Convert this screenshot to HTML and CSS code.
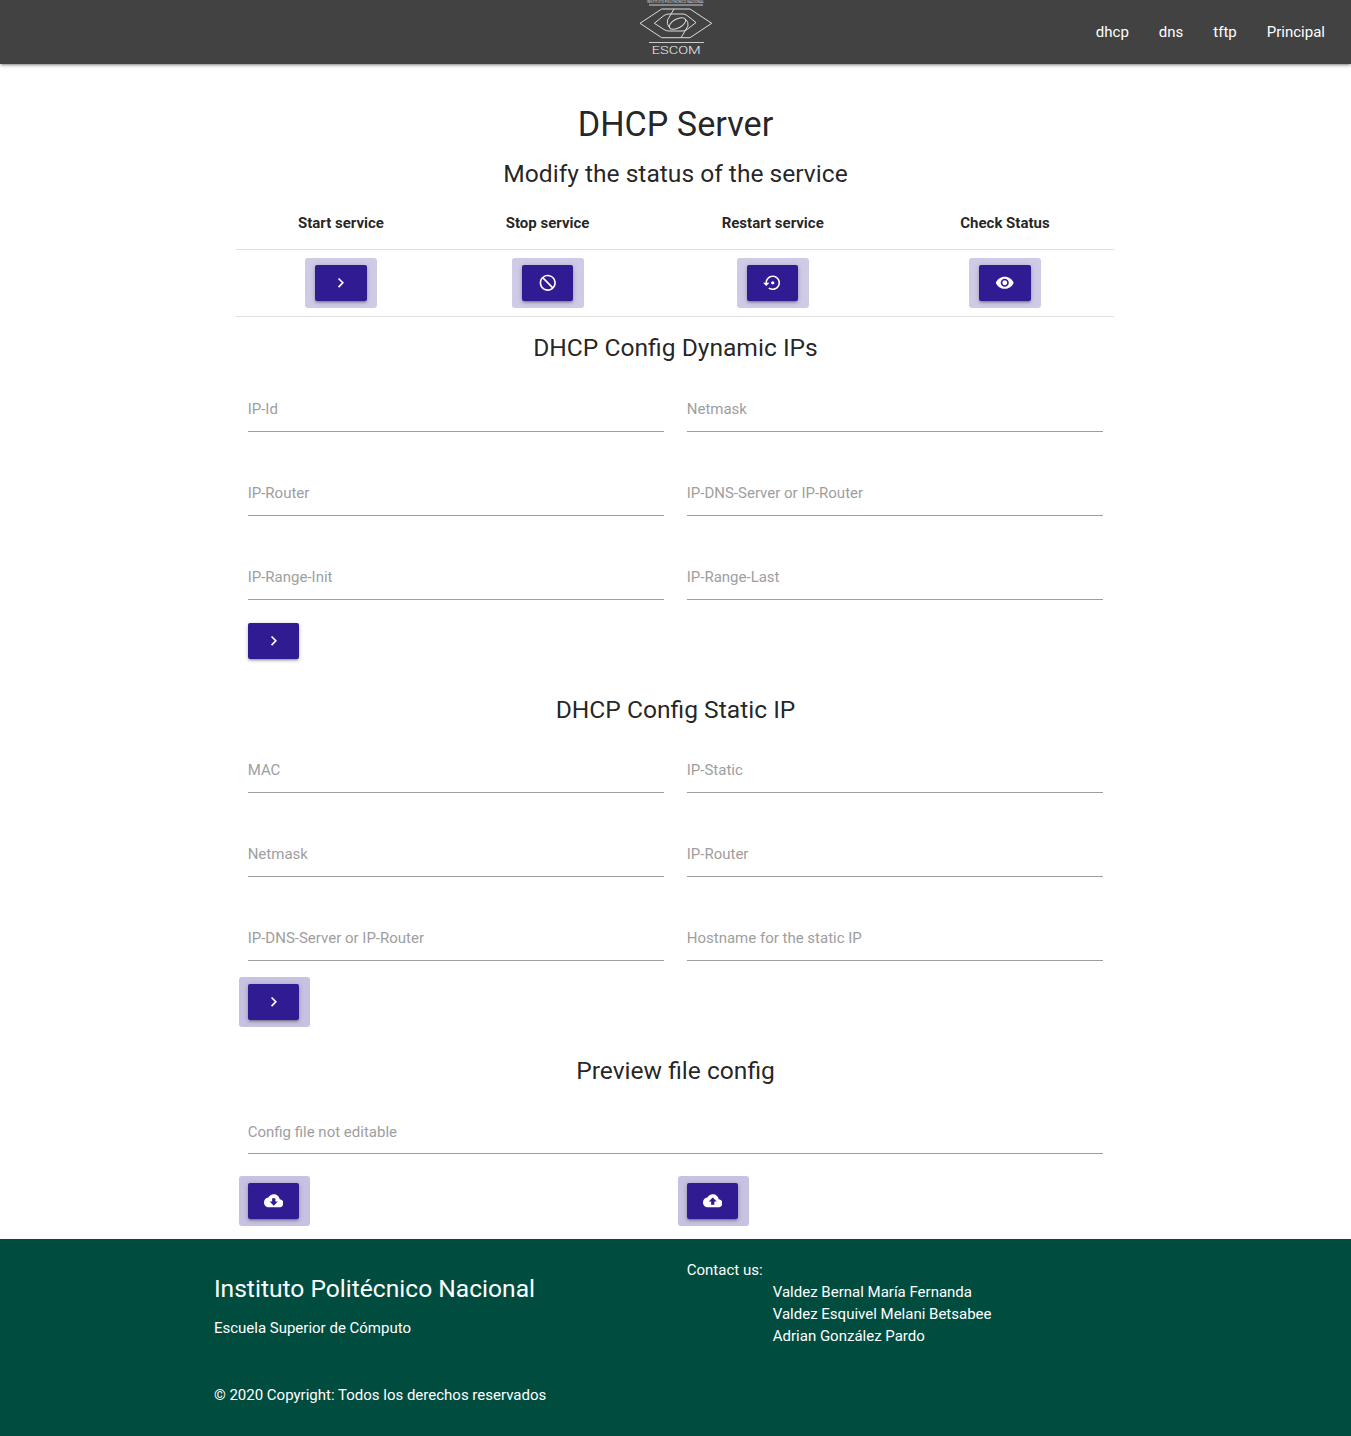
FILE: index.html
```html
<!DOCTYPE html>
<html lang="en">
<head>
<meta charset="utf-8">
<title>DHCP Server</title>
<link rel="stylesheet" href="styles.css">
</head>
<body>
<header class="nav">
  <div></div>
  <svg class="logo" viewBox="0 0 76 64" aria-label="ESCOM">
    <text class="logo-small" x="9" y="3.400" textLength="57" lengthAdjust="spacingAndGlyphs">INSTITUTO POLITÉCNICO NACIONAL</text>
    <path class="logo-rule" d="M11 5h54M11 42.500h55"/>
    <path class="logo-line" d="M2 23.300 23.700 9H52L73.700 23.300 52 37.700H23.700Z"/>
    <path class="logo-line" d="M16.300 23.300 26 15.500Q28 14 31 14H45Q47 14 49 15.500L58 22.500 49 29.500Q47 31 45 31H31Q28 31 26 29.500Z"/>
    <ellipse class="logo-line" cx="39.500" cy="23.500" rx="9" ry="4.500" transform="rotate(-28 39.500 23.500)"/>
    <path class="logo-line" d="M36 9 29.500 20Q28.500 24 31 27M43 37.700 50 26Q50.500 22 48 19.500"/>
    <text class="logo-name" x="13.700" y="54.300" textLength="49" lengthAdjust="spacingAndGlyphs">ESCOM</text>
  </svg>
  <nav class="nav-links">
    <a href="#">dhcp</a>
    <a href="#">dns</a>
    <a href="#">tftp</a>
    <a href="#">Principal</a>
  </nav>
</header>

<main class="main">
  <h1 class="title">DHCP Server</h1>
  <h2 class="subtitle">Modify the status of the service</h2>
  <table class="status">
    <thead>
      <tr><th>Start service</th><th>Stop service</th><th>Restart service</th><th>Check Status</th></tr>
    </thead>
    <tbody>
      <tr>
        <td><button class="btn halo" type="button"><svg class="icon" viewBox="0 0 24 24"><path d="M10 6 8.590 7.410 13.170 12l-4.580 4.590L10 18l6-6z"/></svg></button></td>
        <td><button class="btn halo" type="button"><svg class="icon" viewBox="0 0 24 24"><path d="M12 2C6.480 2 2 6.480 2 12s4.480 10 10 10 10-4.480 10-10S17.520 2 12 2zm0 18c-4.420 0-8-3.580-8-8 0-1.850.630-3.550 1.690-4.900L16.900 18.310C15.550 19.370 13.850 20 12 20zm6.310-3.100L7.100 5.690C8.450 4.630 10.150 4 12 4c4.420 0 8 3.580 8 8 0 1.850-.630 3.550-1.690 4.900z"/></svg></button></td>
        <td><button class="btn halo" type="button"><svg class="icon" viewBox="0 0 24 24"><path d="M14 12c0-1.100-.9-2-2-2s-2 .9-2 2 .9 2 2 2 2-.9 2-2zm-2-9c-4.970 0-9 4.030-9 9H0l4 4 4-4H5c0-3.870 3.130-7 7-7s7 3.130 7 7-3.130 7-7 7c-1.510 0-2.910-.49-4.060-1.300l-1.420 1.440C8.040 20.300 9.940 21 12 21c4.970 0 9-4.030 9-9s-4.030-9-9-9z"/></svg></button></td>
        <td><button class="btn halo" type="button"><svg class="icon" viewBox="0 0 24 24"><path d="M12 4.500C7 4.500 2.730 7.610 1 12c1.730 4.390 6 7.500 11 7.500s9.270-3.110 11-7.500c-1.730-4.390-6-7.500-11-7.500zM12 17c-2.760 0-5-2.240-5-5s2.240-5 5-5 5 2.240 5 5-2.240 5-5 5zm0-8c-1.660 0-3 1.340-3 3s1.340 3 3 3 3-1.340 3-3-1.340-3-3-3z"/></svg></button></td>
      </tr>
    </tbody>
  </table>

  <h2 class="subtitle section-first">DHCP Config Dynamic IPs</h2>
  <form class="fields">
    <input class="field" type="text" placeholder="IP-Id">
    <input class="field" type="text" placeholder="Netmask">
    <input class="field" type="text" placeholder="IP-Router">
    <input class="field" type="text" placeholder="IP-DNS-Server or IP-Router">
    <input class="field" type="text" placeholder="IP-Range-Init">
    <input class="field" type="text" placeholder="IP-Range-Last">
  </form>
  <div class="actions">
    <button class="btn" type="button"><svg class="icon" viewBox="0 0 24 24"><path d="M10 6 8.590 7.410 13.170 12l-4.580 4.590L10 18l6-6z"/></svg></button>
  </div>

  <h2 class="subtitle section">DHCP Config Static IP</h2>
  <form class="fields">
    <input class="field" type="text" placeholder="MAC">
    <input class="field" type="text" placeholder="IP-Static">
    <input class="field" type="text" placeholder="Netmask">
    <input class="field" type="text" placeholder="IP-Router">
    <input class="field" type="text" placeholder="IP-DNS-Server or IP-Router">
    <input class="field" type="text" placeholder="Hostname for the static IP">
  </form>
  <div class="actions">
    <button class="btn halo halo-dark" type="button"><svg class="icon" viewBox="0 0 24 24"><path d="M10 6 8.590 7.410 13.170 12l-4.580 4.590L10 18l6-6z"/></svg></button>
  </div>

  <h2 class="subtitle section">Preview file config</h2>
  <form class="fields fields-single">
    <input class="field" type="text" placeholder="Config file not editable">
  </form>
  <div class="actions actions-split">
    <div><button class="btn halo halo-dark" type="button"><svg class="icon" viewBox="0 0 24 24"><path d="M19.350 10.040C18.670 6.590 15.640 4 12 4 9.110 4 6.600 5.640 5.350 8.040 2.340 8.360 0 10.910 0 14c0 3.310 2.690 6 6 6h13c2.760 0 5-2.240 5-5 0-2.640-2.050-4.780-4.650-4.960zM17 13l-5 5-5-5h3V9h4v4h3z"/></svg></button></div>
    <div><button class="btn halo halo-dark" type="button"><svg class="icon" viewBox="0 0 24 24"><path d="M19.350 10.040C18.670 6.590 15.640 4 12 4 9.110 4 6.600 5.640 5.350 8.040 2.340 8.360 0 10.910 0 14c0 3.310 2.690 6 6 6h13c2.760 0 5-2.240 5-5 0-2.640-2.050-4.780-4.650-4.960zM14 13v4h-4v-4H7l5-5 5 5h-3z"/></svg></button></div>
  </div>
</main>

<footer class="footer">
  <div class="footer-grid">
    <div>
      <h3 class="footer-title">Instituto Politécnico Nacional</h3>
      <p class="footer-text">Escuela Superior de Cómputo</p>
    </div>
    <div class="contact">
      <div>Contact us:</div>
      <ul class="people">
        <li>Valdez Bernal María Fernanda</li>
        <li>Valdez Esquivel Melani Betsabee</li>
        <li>Adrian González Pardo</li>
      </ul>
    </div>
  </div>
  <div class="copyright">© 2020 Copyright: Todos los derechos reservados</div>
</footer>
</body>
</html>
```
FILE: styles.css
```css
* { box-sizing: border-box; }

html { font-size: 15px; }

body {
  margin: 0;
  font-family: Roboto, "Noto Sans", sans-serif;
  font-size: 15px;
  line-height: 1.5;
  color: rgba(0, 0, 0, .87);
  background: #fff;
}

.nav {
  height: 64px;
  display: grid;
  grid-template-columns: 1fr 76px 1fr;
  background: #424242;
  box-shadow: 0 2px 2px 0 rgba(0,0,0,.14), 0 3px 1px -2px rgba(0,0,0,.12), 0 1px 5px 0 rgba(0,0,0,.2);
}

.logo { width: 76px; height: 64px; display: block; }
.logo-line { fill: none; stroke: #dcdcdc; stroke-width: 1; }
.logo-rule { fill: none; stroke: #c8ccd0; stroke-width: 1; }
.logo-small { font: 400 3.500px Roboto, sans-serif; fill: #ddd; }
.logo-name { font: 300 11px Roboto, sans-serif; fill: #f0f0f0; }

.nav-links {
  display: flex;
  justify-content: flex-end;
  padding-right: 11px;
}

.nav-links a {
  padding: 0 15px;
  line-height: 64px;
  color: #fff;
  font-size: 15px;
  text-decoration: none;
}

.main {
  width: 65%;
  margin: 0 auto;
  padding-top: 42px;
}

.title {
  margin: 0;
  font-size: 34.2px;
  line-height: 1.1;
  font-weight: 400;
  text-align: center;
}

.subtitle {
  margin: 16.4px 0 9.84px;
  font-size: 24.6px;
  line-height: 1.1;
  font-weight: 400;
  text-align: center;
}

.section-first { margin-bottom: 10.84px; }
.section { margin-top: 37.4px; }

.status {
  width: calc(100% - .5px);
  table-layout: fixed;
  border-collapse: collapse;
  border-spacing: 0;
}

.status tr { border-bottom: 1px solid rgba(0, 0, 0, .12); }

.status th {
  padding: 15px 5px;
  font-weight: 700;
  text-align: center;
}

.status th:nth-child(1) { width: 23.83%; }
.status th:nth-child(2) { width: 23.24%; }
.status th:nth-child(3) { width: 28.07%; }
.status th:nth-child(4) { width: 24.86%; }

.status td {
  padding: 15px 5px;
  text-align: center;
  line-height: 0;
}

.btn {
  position: relative;
  display: inline-block;
  height: 36px;
  padding: 0 16px;
  border: 0;
  border-radius: 2px;
  background: #311b92;
  vertical-align: top;
  box-shadow: 0 2px 2px 0 rgba(0,0,0,.14), 0 3px 1px -2px rgba(0,0,0,.12), 0 1px 5px 0 rgba(0,0,0,.2);
}

.halo::before {
  content: "";
  position: absolute;
  inset: -7px -10.5px -7px -10px;
  border-radius: 3px;
  background: rgba(49, 27, 146, .23);
  z-index: -1;
}

.halo-dark::before {
  inset: -7px -11px -7px -9px;
  background: rgba(49, 27, 146, .27);
}

.icon {
  display: block;
  width: 19.5px;
  height: 19.5px;
  fill: #fff;
  margin-bottom: 1.5px;
}

.actions .icon { margin-bottom: 0; }

.fields {
  display: grid;
  grid-template-columns: 1fr 1fr;
}

.fields-single { grid-template-columns: 1fr; }

.field {
  display: block;
  width: calc(100% - 22.5px);
  height: 46px;
  margin: 14px 11.25px 24px;
  padding: 2px 0 0;
  border: 0;
  border-bottom: 1px solid #9e9e9e;
  border-radius: 0;
  outline: 0;
  background: transparent;
  font: 400 15px Roboto, sans-serif;
  color: rgba(0, 0, 0, .87);
}

.field::placeholder { color: #9e9e9e; opacity: 1; }

.actions {
  padding: 0 11.25px;
  height: 36px;
  margin-top: -1px;
  margin-bottom: 20px;
}

.actions-split {
  display: grid;
  grid-template-columns: 1fr 1fr;
  column-gap: 22.5px;
  margin-top: 5px;
}

.footer {
  padding: 20px 0 29.75px;
  background: #004d40;
  color: #fff;
}

.footer-grid {
  width: 70%;
  margin: 0 auto;
  display: grid;
  grid-template-columns: 1fr 1fr;
  column-gap: 22.5px;
  padding: 0 11.25px;
}

.footer-title {
  margin: 15.4px 0 15px;
  font-size: 24.6px;
  line-height: 1.1;
  font-weight: 400;
}

.footer-text { margin: 0; }

.contact { line-height: 22px; }

.people {
  margin: 0;
  padding: 0 0 0 86px;
  list-style: none;
}

.copyright {
  width: 70%;
  margin: 36.75px auto 0;
  padding: 0 11.25px;
}
```
